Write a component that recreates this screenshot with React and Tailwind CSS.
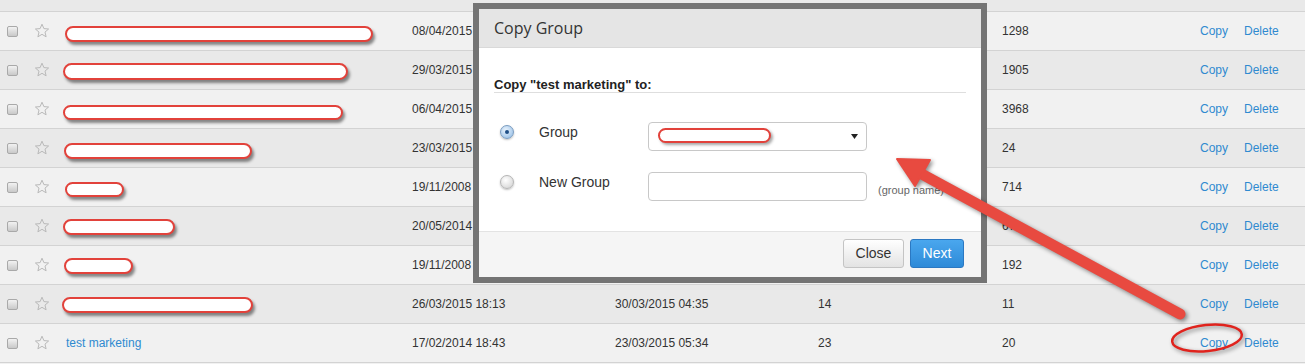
const rows = [
  { ell: 'ml-[-1px] w-[308px] h-[16px] translate-y-[3px]', d1: '08/04/2015 11:02', d2: '09/04/2015 08:14', c1: '12', c2: '1298' },
  { ell: 'ml-[-3px] w-[285px] h-[17px] translate-y-[1px]', d1: '29/03/2015 17:41', d2: '02/04/2015 10:20', c1: '9', c2: '1905' },
  { ell: 'ml-[-3px] w-[280px] h-[15px] translate-y-[3px]', d1: '06/04/2015 09:15', d2: '07/04/2015 06:02', c1: '31', c2: '3968' },
  { ell: 'ml-[-2px] w-[188px] h-[16px] translate-y-[3px]', d1: '23/03/2015 14:20', d2: '24/03/2015 07:45', c1: '4', c2: '24' },
  { ell: 'ml-[-1px] w-[59px] h-[15px] translate-y-[2px]', d1: '19/11/2008 14:36', d2: '23/03/2015 05:34', c1: '18', c2: '714' },
  { ell: 'ml-[-3px] w-[112px] h-[16px] translate-y-[1px]', d1: '20/05/2014 15:07', d2: '23/03/2015 05:34', c1: '5', c2: '67' },
  { ell: 'ml-[-2px] w-[69px] h-[16px] translate-y-[1px]', d1: '19/11/2008 09:51', d2: '23/03/2015 05:34', c1: '9', c2: '192' },
  { ell: 'ml-[-4px] w-[191px] h-[16px] translate-y-[1px]', d1: '26/03/2015 18:13', d2: '30/03/2015 04:35', c1: '14', c2: '11' },
  { name: 'test marketing', d1: '17/02/2014 18:43', d2: '23/03/2015 05:34', c1: '23', c2: '20' },
];

function Checkbox() {
  return (
    <span className="block h-[11px] w-[11px] rounded-[2px] border border-[#a9a9a9] bg-gradient-to-b from-[#f2f2f2] to-[#c9c9c9]" />
  );
}

function Star() {
  return (
    <svg width="16" height="16" viewBox="0 0 16 16" className="block">
      <path
        d="M8 1.2 9.9 5.6 14.6 6 11 9.1 12.1 13.8 8 11.3 3.9 13.8 5 9.1 1.4 6 6.1 5.6Z"
        fill="none" stroke="#b9b9b9" strokeWidth="1" strokeLinejoin="round"
      />
    </svg>
  );
}

function Radio({ checked }) {
  return (
    <span
      className={`flex h-[14px] w-[14px] items-center justify-center rounded-full border shadow-[0_1px_2px_rgba(0,0,0,0.25)] ${
        checked
          ? 'border-[#7a9cc0] bg-[radial-gradient(circle_at_40%_35%,#eaf3fc,#8db9e4)]'
          : 'border-[#b5b5b5] bg-[radial-gradient(circle_at_40%_35%,#ffffff,#cfcfcf)]'
      }`}
    >
      {checked && <span className="h-[4px] w-[4px] rounded-full bg-[#1f4f86]" />}
    </span>
  );
}

function Row({ r, i }) {
  const bg = i % 2 === 0 ? 'bg-[#f1f1f1]' : 'bg-[#e9e9e9]';
  return (
    <div className={`flex h-[39px] items-center border-b border-[#d3d3d3] text-[12px] text-[#333] ${bg}`}>
      <div className="flex w-[66px] items-center pl-[7px]">
        <Checkbox />
        <span className="ml-[16px]"><Star /></span>
      </div>
      <div className="flex w-[346px] items-center">
        {r.name ? (
          <span className="text-[#2f8ad0]">{r.name}</span>
        ) : (
          <span
            className={`block rounded-full border-[2.5px] border-[#e2423b] bg-white shadow-[2px_3px_3px_rgba(0,0,0,0.45)] ${r.ell}`}
          />
        )}
      </div>
      <div className="w-[203px]">{r.d1}</div>
      <div className="w-[203px]">{r.d2}</div>
      <div className="w-[184px]">{r.c1}</div>
      <div className="w-[198px]">{r.c2}</div>
      <div className="flex gap-[16px] text-[#2f8ad0]">
        <span>Copy</span>
        <span>Delete</span>
      </div>
    </div>
  );
}

function CopyModal() {
  return (
    <div className="absolute left-[473px] top-[3px] flex h-[280px] w-[514px] flex-col border-[6px] border-[#747474] bg-white">
      <div className="flex h-[39px] shrink-0 items-center border-b border-[#d9d9d9] bg-[#e5e5e5] pl-[15px] font-['Open_Sans',sans-serif] text-[16px] text-[#333]">
        Copy Group
      </div>
      <div className="flex-1 px-[15px] pt-[29px]">
        <div className="border-b border-[#dedede] text-[13px] font-bold leading-[15px] text-[#222]">
          Copy "test marketing" to:
        </div>
        <div className="mt-[29px] flex items-start text-[14px] text-[#333]">
          <div className="ml-[6px] mt-[3px]"><Radio checked /></div>
          <div className="ml-[25px] mt-[2px] w-[109px] leading-[16px]">Group</div>
          <div className="relative flex h-[29px] w-[219px] items-center rounded-[4px] border border-[#c8c8c8] bg-white pl-[10px] pr-[8px]">
            <span className="text-[10px] text-[#444]">E</span>
            <span className="absolute left-[9px] top-[5px] block h-[15px] w-[113px] rounded-full border-[2px] border-[#e2423b] bg-white shadow-[2px_2px_3px_rgba(0,0,0,0.35)]" />
            <svg width="7" height="5" viewBox="0 0 7 5" className="ml-auto"><path d="M0 0h7L3.5 5Z" fill="#222" /></svg>
          </div>
        </div>
        <div className="mt-[21px] flex items-start text-[14px] text-[#333]">
          <div className="ml-[6px] mt-[3px]"><Radio /></div>
          <div className="ml-[25px] mt-[2px] w-[109px] leading-[16px]">New Group</div>
          <div className="h-[29px] w-[219px] rounded-[4px] border border-[#c8c8c8] bg-white" />
          <div className="ml-[11px] mt-[10px] text-[11px] text-[#666]">(group name)</div>
        </div>
      </div>
      <div className="flex h-[46px] shrink-0 items-start justify-end gap-[6px] border-t border-[#e3e3e3] bg-[#f5f5f5] pr-[17px] pt-[7px] text-[14px]">
        <button className="h-[29px] w-[61px] rounded-[3px] border border-[#c4c4c4] bg-gradient-to-b from-white to-[#e3e3e3] text-[#333]">
          Close
        </button>
        <button className="h-[29px] w-[54px] rounded-[3px] border border-[#2b78c2] bg-gradient-to-b from-[#4aa7ee] to-[#2d8ad8] text-white">
          Next
        </button>
      </div>
    </div>
  );
}

export default function App() {
  return (
    <div className="relative h-[364px] w-[1305px] overflow-hidden bg-[#f1f1f1] font-['Liberation_Sans',Arial,sans-serif]">
      <div className="h-[12px] border-b border-[#d3d3d3] bg-[#e9e9e9]" />
      {rows.map((r, i) => (
        <Row key={i} r={r} i={i} />
      ))}

      <CopyModal />

      {/* annotation arrow + circle */}
      <svg
        width="1305" height="364" viewBox="0 0 1305 364"
        className="pointer-events-none absolute left-0 top-0 drop-shadow-[2px_2px_2px_rgba(0,0,0,0.45)]"
      >
        <line x1="1180" y1="314" x2="918" y2="172" stroke="#e84a40" strokeWidth="11" strokeLinecap="round" />
        <polygon points="897,159 930,160 915,186" fill="#e84a40" stroke="#e84a40" strokeWidth="2" strokeLinejoin="round" />
        <ellipse
          cx="1207" cy="338" rx="35" ry="13" fill="none" stroke="#e0231d" strokeWidth="2.5"
          transform="rotate(-6 1207 338)"
        />
      </svg>
    </div>
  );
}
